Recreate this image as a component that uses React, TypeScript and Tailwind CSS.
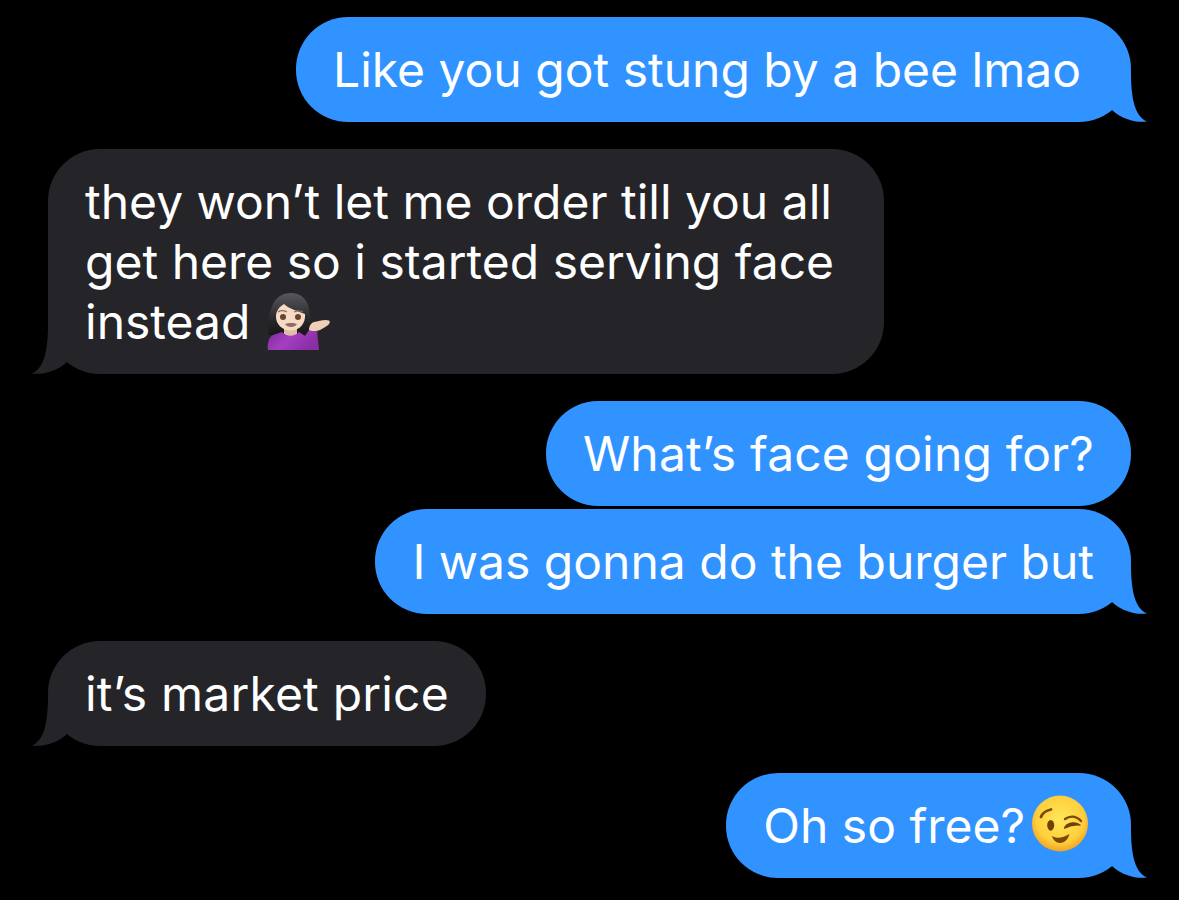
import type { ReactNode } from 'react';

function Tail({ side, color }: { side: 'left' | 'right'; color: string }) {
  const pos = side === 'right' ? 'right-[-16px]' : 'left-[-16px] -scale-x-100';
  return (
    <svg viewBox="0 0 36 50" className={`absolute bottom-0 w-9 h-[50px] ${pos}`} style={{ fill: color }}>
      <path d="M0 0 H20 C20 20 22 44 36 49.5 C26 51 12 48 1 38 Z" />
    </svg>
  );
}

function Bubble({ me, tail, className = '', children }: { me?: boolean; tail?: boolean; className?: string; children: ReactNode }) {
  const color = me ? '#3093ff' : '#252529';
  return (
    <div
      className={`relative rounded-[52px] pl-[37px] pr-[37px] py-[22.25px] text-white text-[48px] leading-[60px] whitespace-nowrap ${
        me ? 'self-end bg-[#3093ff]' : 'self-start bg-[#252529]'
      } ${className}`}
    >
      {tail && <Tail side={me ? 'right' : 'left'} color={color} />}
      <span className="relative top-[1px]">{children}</span>
    </div>
  );
}

function ShrugEmoji() {
  return (
    <svg viewBox="0 0 68 60" className="inline-block w-[68px] h-[60px] ml-[14px] -my-[10px] align-[-4px]">
      <defs>
        <linearGradient id="shirt" x1="0" y1="0" x2="1" y2="0.4">
          <stop offset="0" stopColor="#7a2a96" />
          <stop offset="0.5" stopColor="#a53fc0" />
          <stop offset="1" stopColor="#8a2ea6" />
        </linearGradient>
        <linearGradient id="hair" x1="0" y1="0" x2="0" y2="1">
          <stop offset="0" stopColor="#58585c" />
          <stop offset="0.6" stopColor="#2a2a2d" />
          <stop offset="1" stopColor="#161618" />
        </linearGradient>
      </defs>
      <path d="M5 42 C3 30 5 20 9 11 C13 3 20 0 27 0 C35 0 41 4 44 12 C46 19 47 26 47 33 L44 42 Z" fill="url(#hair)" />
      <path d="M20 33 L33 33 L33 41 C30 45 23 45 20 41 Z" fill="#e3bda3" />
      <path d="M4 57 C3 50 5 44 9 42 L18 39 C23 44 30 44 35 39 L41 43 L45 37 L53 37 L55 57 Z" fill="url(#shirt)" />
      <path d="M45 37 C45 33 47 30 50 29 C55 28 61 26 65 27.5 C67 29 65 32 62 33.5 C58 36 55 38 51 38 C49 38 47 38 45 37 Z" fill="#f0cfb6" />
      <path d="M12 24 C12 18 15 14 20 11 C25 16 34 18 41 21 C42 31 35 37.5 27 37.5 C18 37.5 12 31 12 24 Z" fill="#f7dac3" />
      <ellipse cx="19" cy="24" rx="3" ry="3" fill="#6a4630" />
      <ellipse cx="34" cy="24" rx="3" ry="3" fill="#6a4630" />
      <path d="M14 19 C16 17.5 20 17.5 23 19" stroke="#857267" strokeWidth="1.3" fill="none" />
      <path d="M30 19 C33 17.5 36 17.5 39 19" stroke="#857267" strokeWidth="1.3" fill="none" />
      <path d="M21 31 C24 29.5 30 29.5 33 31 C31 35 23 35 21 31 Z" fill="#8a6e68" />
    </svg>
  );
}

function WinkEmoji() {
  return (
    <svg viewBox="0 0 56 57" className="inline-block w-[56px] h-[57px] ml-[7px] mr-[6px] -my-[10px] align-[1.5px]">
      <defs>
        <radialGradient id="face" cx="0.5" cy="0.42" r="0.6">
          <stop offset="0" stopColor="#ffe65a" />
          <stop offset="0.7" stopColor="#ffcf3c" />
          <stop offset="1" stopColor="#f49d20" />
        </radialGradient>
      </defs>
      <circle cx="28" cy="28.5" r="28" fill="url(#face)" />
      <path d="M9 22 C10.5 18 14 15.5 19 14.5" stroke="#7c4a08" strokeWidth="2.8" strokeLinecap="round" fill="none" />
      <ellipse cx="18.7" cy="30.3" rx="3.5" ry="5.4" fill="#6d4208" />
      <path d="M33 24 C38 20.5 44 20.5 49 26" stroke="#7c4a08" strokeWidth="2.4" strokeLinecap="round" fill="none" />
      <path d="M32.5 33 C35 28 42 26 48 30 C43 29.5 38 30.5 32.5 33 Z" fill="#6d4208" stroke="#6d4208" strokeWidth="1.4" strokeLinejoin="round" />
      <path d="M20 41 C25 44 31 43 37.5 39 C36 45 32 48 28 48 C24 48 21 45 20 41 Z" fill="#7c4a08" />
    </svg>
  );
}

export default function App() {
  return (
    <div className="w-full h-[900px] overflow-hidden bg-black px-12 pt-[17px] flex flex-col font-['Inter','Liberation_Sans',sans-serif]">
      <Bubble me tail className="pr-[50px]">Like you got stung by a bee lmao</Bubble>
      <Bubble tail className="mt-[27.5px] pr-[50px]">
        they won’t let me order till you all
        <br />
        get here so i started serving face
        <br />
        instead<ShrugEmoji />
      </Bubble>
      <Bubble me className="mt-[27.5px] tracking-[0.15px]">What’s face going for?</Bubble>
      <Bubble me tail className="mt-[3.5px]">I was gonna do the burger but</Bubble>
      <Bubble tail className="mt-[27.5px] tracking-[0.2px]">it’s market price</Bubble>
      <Bubble me tail className="mt-[27.5px]">Oh so free?<WinkEmoji /></Bubble>
    </div>
  );
}
